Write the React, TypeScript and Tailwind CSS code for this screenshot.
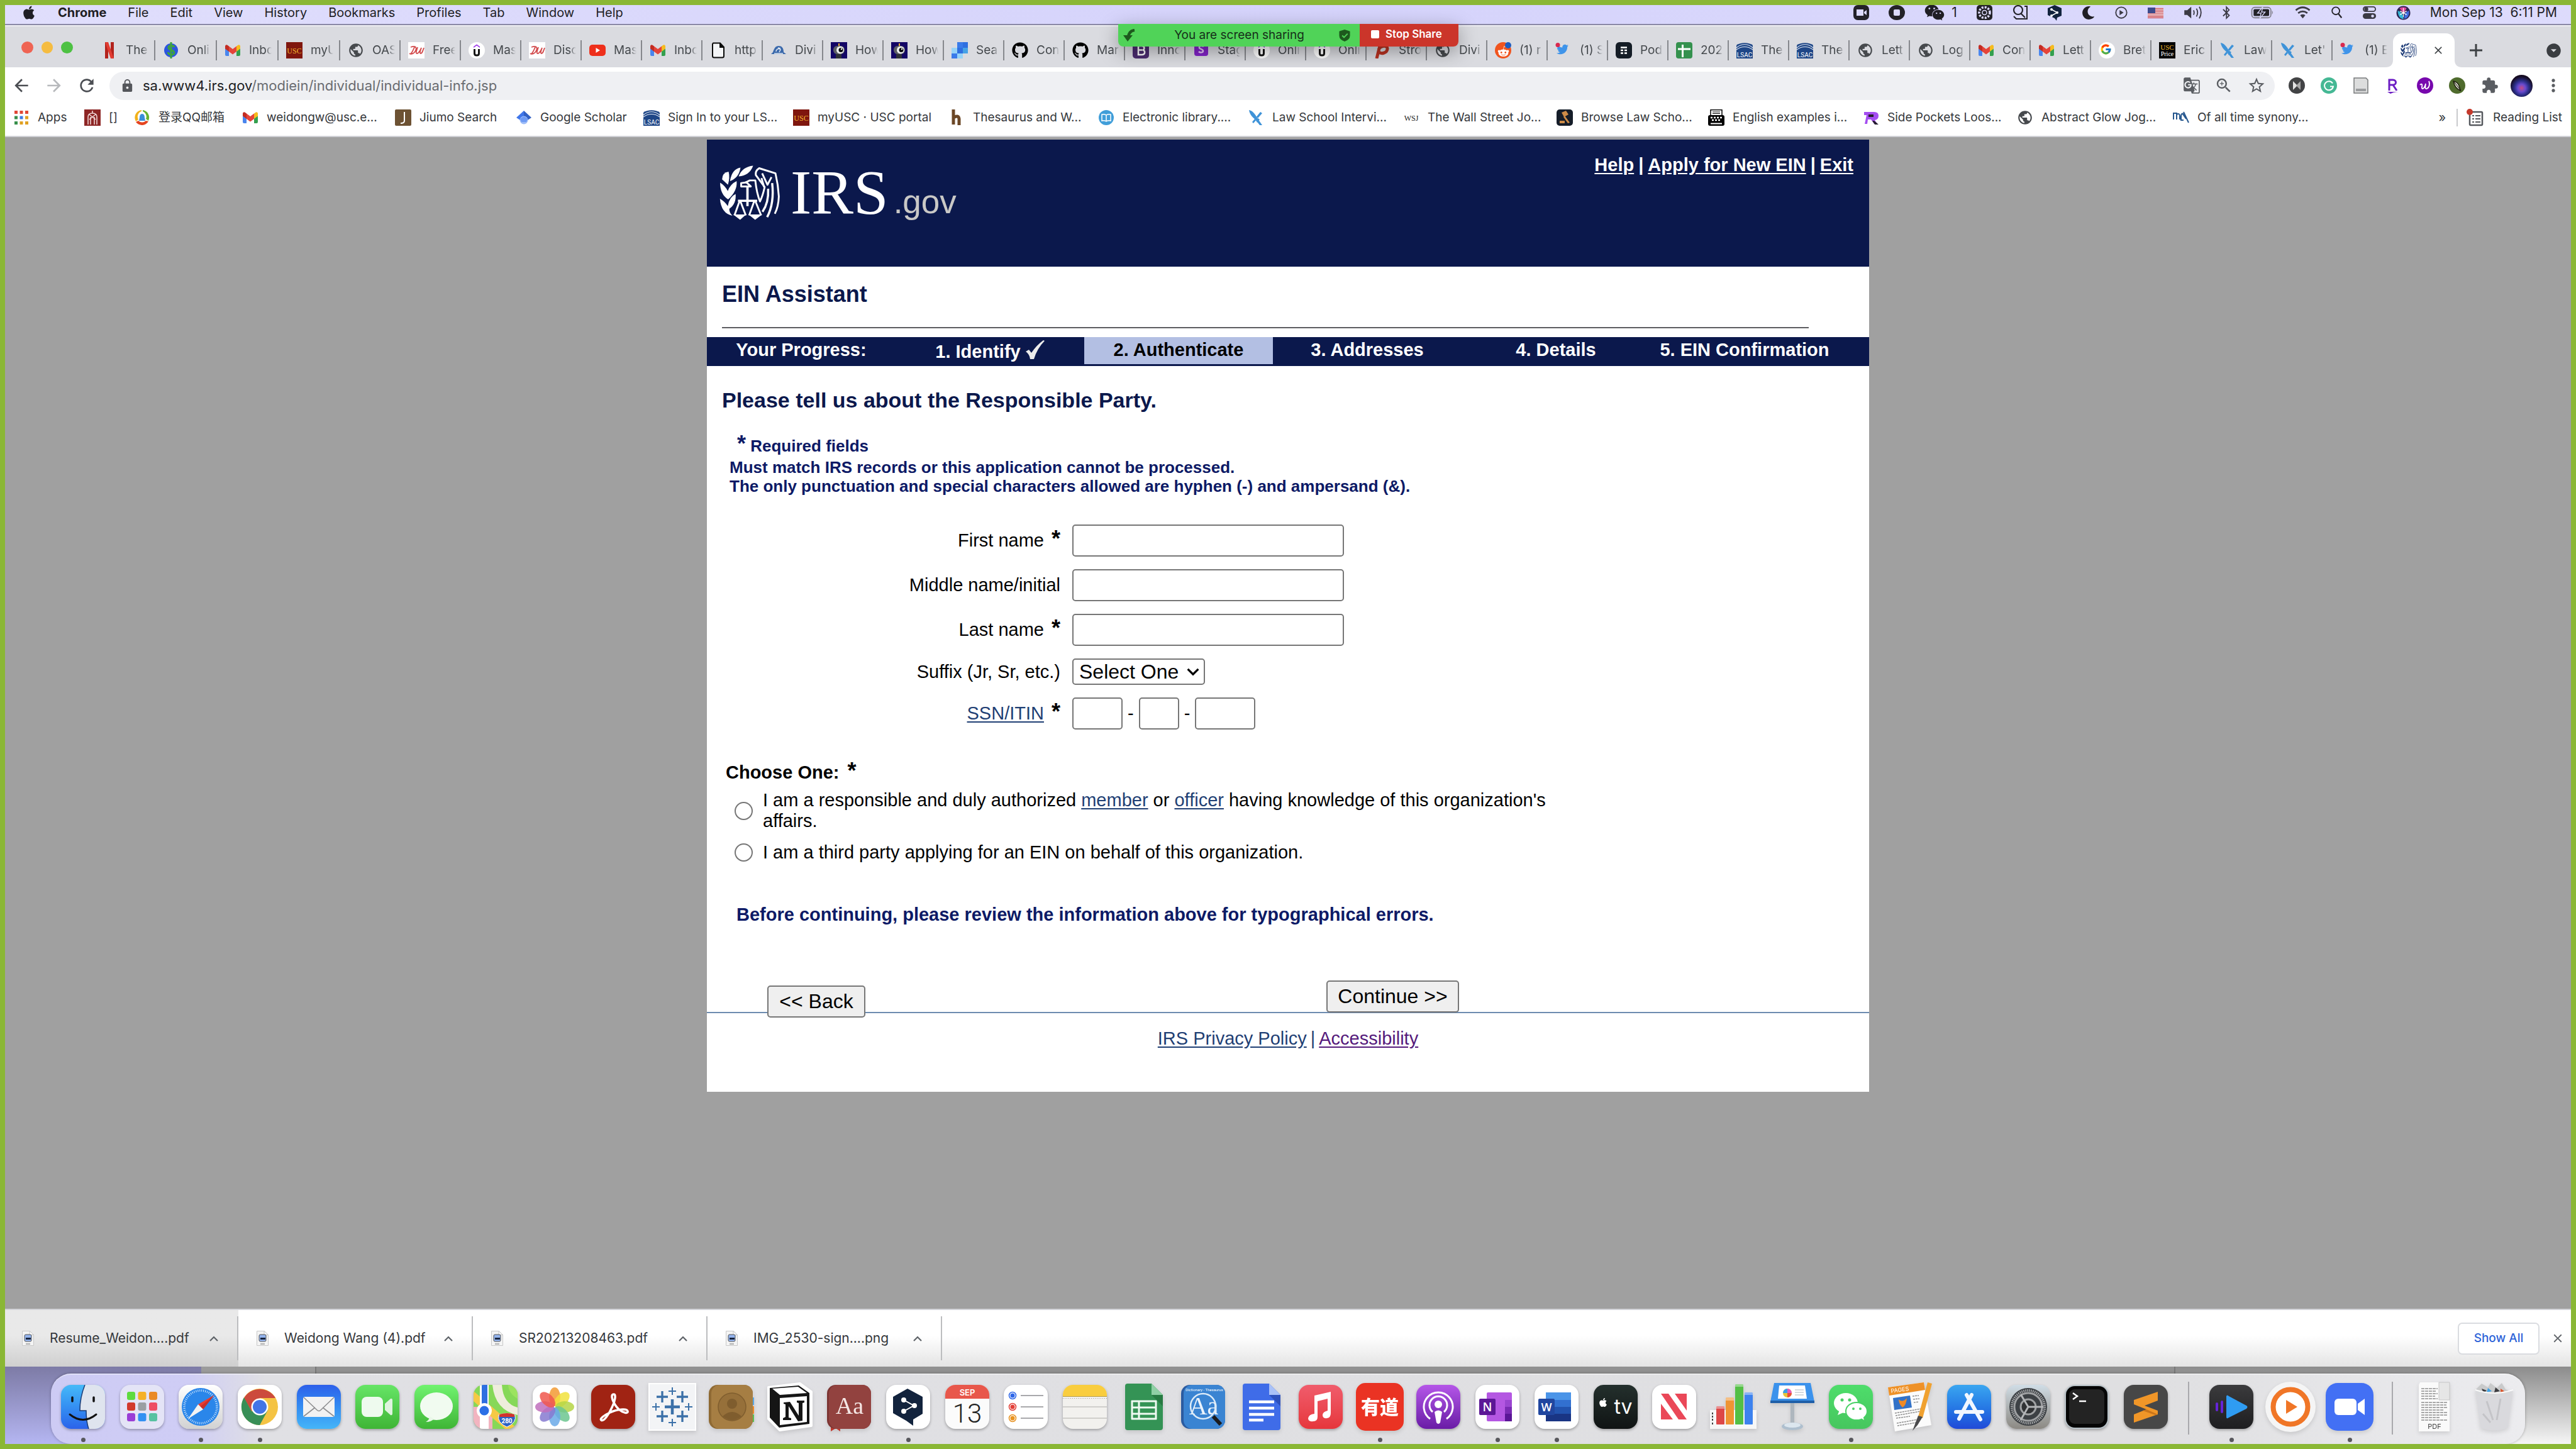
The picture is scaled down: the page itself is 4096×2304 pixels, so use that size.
import React from "react";
import { FaApple, FaBluetoothB, FaGithub, FaMoon, FaRedditAlien, FaTwitter, FaWeixin } from "react-icons/fa";
import { FcGoogle } from "react-icons/fc";
import {
  MdArrowBack,
  MdArrowDropDownCircle,
  MdArrowForward,
  MdClose,
  MdExtension,
  MdGTranslate,
  MdLock,
  MdMoreVert,
  MdOutlineZoomIn,
  MdPublic,
  MdRefresh,
  MdStarBorder,
} from "react-icons/md";

type Kids = { children?: React.ReactNode };

const ICON = "block size-[26px] shrink-0";

/* ---------- favicons ---------- */

const Fav = ({ children }: Kids) => (
  <svg viewBox="0 0 26 26" className={ICON} aria-hidden="true">
    {children}
  </svg>
);

const Globe = () => <MdPublic className={`${ICON} text-[#46494d]`} />;

const Gmail = () => (
  <Fav>
    <path d="M1 6v14a2 2 0 0 0 2 2h4V11z" fill="#4a86ee" />
    <path d="M25 6v14a2 2 0 0 1-2 2h-4V11z" fill="#34a04f" />
    <path d="M19 6.500l2-1.500c2-1.400 4-.5 4 2v3.500l-6 4.500z" fill="#f6bb1d" />
    <path d="M7 6.500L5 5C3 3.600 1 4.500 1 7v3.500L7 15z" fill="#c32c22" />
    <path d="M7 6.500l6 4.600 6-4.600V15l-6 4.600L7 15z" fill="#e5443a" />
  </Fav>
);

const Netflix = () => (
  <Fav>
    <path d="M6 0h5v26l-5 0z" fill="#b3231d" />
    <path d="M15 0h5v26h-5z" fill="#b3231d" />
    <path d="M6 0h5l9 26h-5z" fill="#e23c32" />
  </Fav>
);

const Dollar = () => (
  <Fav>
    <circle cx="13" cy="13" r="11" fill="#2c55e0" />
    <path d="M13 0v26M18 8c-1-3-9-4-9 1 0 4 9 3 9 8 0 4-9 4-10-1" fill="none" stroke="#3fa33c" strokeWidth="3" />
  </Fav>
);

const Usc = () => (
  <Fav>
    <rect width="26" height="26" fill="#7f160e" />
    <text x="13" y="17.500" textAnchor="middle" fontSize="12" fontFamily="Liberation Serif, serif" fill="#f3b72f">
      USC
    </text>
  </Fav>
);

const UscPrice = () => (
  <Fav>
    <rect width="26" height="26" fill="#050505" />
    <text x="13" y="12" textAnchor="middle" fontSize="11" fontFamily="Liberation Serif, serif" fill="#f0b526">
      USC
    </text>
    <text x="13" y="22" textAnchor="middle" fontSize="10" fontFamily="Liberation Serif, serif" fill="#fff">
      Price
    </text>
  </Fav>
);

const Du = () => (
  <Fav>
    <rect width="26" height="26" fill="#fff" />
    <path
      d="M4 19C8 14 9 10 10 8M4 8c7-3 10 0 8 5s-7 7-10 5M15 8c-1 4-4 10-1 10 3 0 5-5 7-9-2 5-3 9-1 9 2 0 3-3 5-9"
      fill="none"
      stroke="#d24a4c"
      strokeWidth="1.800"
    />
  </Fav>
);

const Udemy = () => (
  <Fav>
    <circle cx="13" cy="13" r="13" fill="#fff" />
    <path d="M8 9v-2l5-3.500L18 7v2l-5-3.500z" fill="#9a35e8" />
    <path d="M9.500 11v7c0 4 7 4 7 0v-7" fill="none" stroke="#151515" strokeWidth="3" />
  </Fav>
);

const YouTube = () => (
  <Fav>
    <rect x="0" y="4" width="26" height="18" rx="5" fill="#ee2f1b" />
    <path d="M10.500 9v8l6.500-4z" fill="#fff" />
  </Fav>
);

const FileIcon = () => (
  <Fav>
    <path d="M5 1.500h11l6 6.500v14a2.500 2.500 0 0 1-2.500 2.500h-13A2.500 2.500 0 0 1 4 22V3z" fill="#f4f5f7" stroke="#0a0a0a" strokeWidth="2" />
    <path d="M15 1v8h7" fill="#0a0a0a" />
  </Fav>
);

const Seal = () => (
  <Fav>
    <path d="M4 16c2-6 4-10 9-10s8 3 8 10l4 3H1z" fill="#3b69ab" />
    <path d="M9 15c0-4 5-6 7-3l-2 4M12 9l4 1M6 18h14" fill="none" stroke="#dfe7f2" strokeWidth="1.500" />
  </Fav>
);

const Robot = () => (
  <Fav>
    <rect width="26" height="26" fill="#130666" />
    <rect x="4" y="6" width="18" height="13" rx="6" fill="#5d6066" />
    <circle cx="15" cy="12.500" r="6" fill="#eef0f2" />
    <circle cx="16" cy="12.500" r="3.500" fill="#0c0c10" />
    <circle cx="17" cy="11" r="1.200" fill="#fff" />
    <path d="M13 2v4" stroke="#f2b233" strokeWidth="2" />
    <path d="M8 19h9v7H8z" fill="#303238" />
  </Fav>
);

const Squares = () => (
  <Fav>
    <path d="M9 0h17v18H0V9h9z" fill="#46a2e6" />
    <path d="M9 0h9v9H9zM0 18h9v8H0z" fill="#3a7bea" />
    <path d="M18 0h8v9h-8zM9 9h9v9H9z" fill="#2f6fe0" />
    <path d="M0 9h9v9H0zM9 18h9v8H9z" fill="#97d3f7" />
  </Fav>
);

const Bootstrap = () => (
  <Fav>
    <rect width="26" height="26" rx="5" fill="#4b2c70" />
    <path d="M9 6h5.500c5 0 5 6 1 6.500 5 .5 5 7.500-1 7.500H9zM9 12.500h6" fill="none" stroke="#fff" strokeWidth="2.500" />
  </Fav>
);

const StagS = () => (
  <Fav>
    <rect x="2" y="2" width="22" height="20" rx="4" fill="#8324c9" />
    <path d="M17 7c-3-2-8-1-7 2 0 2 6 2 6 5s-5 3-7 1" fill="none" stroke="#e9c8fb" strokeWidth="2.500" />
  </Fav>
);

const RedP = () => (
  <Fav>
    <path d="M4 26L9 6M7 12c3-7 15-8 14-1-1 7-10 8-13 5" fill="none" stroke="#b93322" strokeWidth="5" />
  </Fav>
);

const Reddit = () => (
  <Fav>
    <circle cx="13" cy="13" r="13" fill="#f0541e" />
    <FaRedditAlien x={4} y={5} width={18} height={18} color="#fff" />
    <circle cx="21" cy="5" r="5" fill="#1d5cc0" />
  </Fav>
);

const Twitter = () => (
  <Fav>
    <FaTwitter x={2} y={2} width={22} height={22} color="#3f94ea" />
    <circle cx="4" cy="4.500" r="3.500" fill="#d9294f" />
  </Fav>
);

const Pod = () => (
  <Fav>
    <rect width="26" height="26" rx="6" fill="#141c26" />
    <path d="M8 8.500h10M8 13h4M14 13h4M8 17.500h4M14 17.500h4" stroke="#fff" strokeWidth="2.500" />
  </Fav>
);

const Sheets = () => (
  <Fav>
    <rect width="26" height="26" rx="4" fill="#34914e" />
    <path d="M10.500 4v20M3 11h20" stroke="#fff" strokeWidth="3" />
  </Fav>
);

const Lsac = () => (
  <Fav>
    <path d="M0 5C6 0 20 0 26 5v21H0z" fill="#1e4687" />
    <path d="M0 9c8-7 18-7 26 0M0 12c8-6 18-6 26 0" fill="none" stroke="#e3e9f3" strokeWidth="1.200" />
    <text x="13" y="24" textAnchor="middle" fontSize="10" fontFamily="Roboto, sans-serif" fill="#fff">
      LSAC
    </text>
  </Fav>
);

const GoogleG = () => (
  <Fav>
    <circle cx="13" cy="13" r="13" fill="#fff" />
    <FcGoogle x={2} y={2} width={22} height={22} />
  </Fav>
);

const BlueBird = () => (
  <Fav>
    <path d="M2 1c5 1 9 5 12 11l9 13-4 0L12 16C6 11 3 7 2 1z" fill="#3f93d8" />
    <path d="M20 4L7 20l2 2L23 6zM8 8l11 8-4 5z" fill="#3f93d8" />
  </Fav>
);

const Eagle = ({ className, color }: { className: string; color: string }) => (
  <svg viewBox="90 84 362 328" className={className} role="img" aria-label="IRS eagle">
    <g fill={color}>
      <path d="M290 86Q225 92 203 150Q268 146 290 86Z" />
      <path d="M214 97Q163 105 151 178Q206 158 214 97Z" />
      <path d="M143 122Q104 128 104 168L139 200Q152 160 143 122Z" />
      <path d="M92 188Q120 204 138 238Q152 196 191 178Q197 236 140 288Q92 258 92 188Z" />
      <path d="M91 284Q120 300 138 328Q148 272 185 256Q190 316 147 344Q146 366 166 386Q98 372 91 284Z" />
      <path d="M170 378h78l-36 32zM262 378h82l-42 32z" />
    </g>
    <g fill="none" stroke={color} strokeWidth="11" strokeLinejoin="round">
      <path d="M245 186L270 174H303Q311 250 331 300Q347 268 359 214L306 142Q302 116 326 101L424 132Q440 200 444 270Q442 330 420 374" />
      <path d="M218 210V190L250 186L276 210Z" />
      <path d="M256 210V328M199 296H314" strokeWidth="14" />
      <path d="M208 300L178 384M214 300L246 384M296 300L266 384M304 300L338 384" />
      <path d="M344 132L358 162L376 200L400 154" />
      <path d="M404 190Q418 310 374 394M380 224Q384 308 346 362" strokeWidth="13" />
      <path d="M356 214L340 160" />
    </g>
  </svg>
);

const tabs: { icon: React.ReactNode; title: string; wide?: boolean }[] = [
  { icon: <Netflix />, title: "The", wide: true },
  { icon: <Dollar />, title: "Onli", wide: true },
  { icon: <Gmail />, title: "Inbo", wide: true },
  { icon: <Usc />, title: "myU", wide: true },
  { icon: <Globe />, title: "OAS" },
  { icon: <Du />, title: "Free" },
  { icon: <Udemy />, title: "Mas" },
  { icon: <Du />, title: "Disc" },
  { icon: <YouTube />, title: "Mas" },
  { icon: <Gmail />, title: "Inbo" },
  { icon: <FileIcon />, title: "http" },
  { icon: <Seal />, title: "Divi" },
  { icon: <Robot />, title: "How" },
  { icon: <Robot />, title: "How" },
  { icon: <Squares />, title: "Sea" },
  { icon: <FaGithub className={`${ICON} text-black`} />, title: "Con" },
  { icon: <FaGithub className={`${ICON} text-black`} />, title: "Mar" },
  { icon: <Bootstrap />, title: "Inno" },
  { icon: <StagS />, title: "Stag" },
  { icon: <Udemy />, title: "Onli" },
  { icon: <Udemy />, title: "Onli" },
  { icon: <RedP />, title: "Stro" },
  { icon: <Globe />, title: "Divi" },
  { icon: <Reddit />, title: "(1) r" },
  { icon: <Twitter />, title: "(1) S" },
  { icon: <Pod />, title: "Pod" },
  { icon: <Sheets />, title: "202" },
  { icon: <Lsac />, title: "The" },
  { icon: <Lsac />, title: "The" },
  { icon: <Globe />, title: "Lett" },
  { icon: <Globe />, title: "Log" },
  { icon: <Gmail />, title: "Con" },
  { icon: <Gmail />, title: "Lett" },
  { icon: <GoogleG />, title: "Bret" },
  { icon: <UscPrice />, title: "Eric" },
  { icon: <BlueBird />, title: "Law" },
  { icon: <BlueBird />, title: "Let'" },
  { icon: <Twitter />, title: "(1) E" },
];

/* ---------- macOS menu bar ---------- */

const menus = ["File", "Edit", "View", "History", "Bookmarks", "Profiles", "Tab", "Window", "Help"];

const Status = ({ w, h = 24, className, children }: Kids & { w: number; h?: number; className: string }) => (
  <svg viewBox={`0 0 ${w} ${h}`} className={`block shrink-0 ${className}`} fill="#232228" aria-hidden="true">
    {children}
  </svg>
);

const MenuBar = () => (
  <header className="flex h-[32px] items-start justify-between border-b-2 border-[#8a88a6] bg-linear-to-r from-[#e0defc] via-[#d5d3fb] to-[#dddbfc] pr-[22px] pl-[26px] text-[#1f1e24]">
    <nav aria-label="Menu bar" className="flex h-[23px] items-center gap-[34px] text-[20px]">
      <FaApple className="size-[24px]" />
      <span className="font-bold">Chrome</span>
      {menus.map((m) => (
        <span key={m}>{m}</span>
      ))}
    </nav>
    <div className="flex h-[24px] items-center gap-[31px] text-[21px]">
      <Status w={25} className="h-[24px] w-[25px]">
        <rect width="25" height="24" rx="7" />
        <path d="M5 7h11v10H5zM17 11l4-3v8l-4-3z" fill="#dcdafc" />
      </Status>
      <Status w={26} className="h-[24px] w-[26px]">
        <ellipse cx="13" cy="12" rx="13" ry="12" />
        <rect x="8" y="7" width="10" height="10" rx="2" fill="#dcdafc" />
      </Status>
      <span className="flex items-center gap-[11px]">
        <FaWeixin className="size-[32px]" />1
      </span>
      <Status w={25} className="h-[24px] w-[25px]">
        <rect width="25" height="24" rx="5" />
        <circle cx="12.500" cy="12" r="8.500" fill="none" stroke="#dcdafc" strokeWidth="3.500" strokeDasharray="3 2" />
        <circle cx="12.500" cy="12" r="3.500" fill="none" stroke="#dcdafc" strokeWidth="1.500" />
      </Status>
      <Status w={25} className="h-[24px] w-[25px]">
        <path d="M20 2h4v20H7l-4-4" fill="none" stroke="#232228" strokeWidth="2" />
        <circle cx="10" cy="8" r="7" fill="none" stroke="#232228" strokeWidth="2.200" />
        <path d="M14 13l7 7" stroke="#232228" strokeWidth="2.200" />
      </Status>
      <Status w={24} className="h-[26px] w-[24px]">
        <path d="M12 0l11 5v12l-7 3-1 5-3-4L1 16V5z" fill="#12233d" />
        <path d="M7 7l9 5-9 5" fill="none" stroke="#fff" strokeWidth="1.500" />
        <circle cx="7" cy="7" r="2" fill="#fff" />
        <circle cx="16" cy="12" r="2" fill="#fff" />
        <circle cx="7" cy="17" r="2" fill="#fff" />
      </Status>
      <FaMoon className="size-[21px]" />
      <Status w={22} className="h-[22px] w-[22px]">
        <circle cx="11" cy="12" r="9.500" fill="none" stroke="#3b3a44" strokeWidth="2" />
        <path d="M8 7.500v9l7-4.500z" fill="#3b3a44" />
      </Status>
      <Status w={25} h={17} className="h-[17px] w-[25px]">
        <rect width="25" height="17" fill="#f7f4f6" />
        <path d="M0 1.300h25M0 4h25M0 6.600h25M0 9.200h25M0 11.800h25M0 14.400h25M0 16.500h25" stroke="#c7404b" strokeWidth="1.300" />
        <rect width="12" height="9" fill="#3d4b8c" />
      </Status>
      <Status w={31} className="h-[22px] w-[31px]">
        <path d="M1 8h5l7-6v20l-7-6H1z" fill="#3b3a44" />
        <path d="M17 8q2 4 0 8M22 5q4 7 0 14M27 2q6 10 0 20" fill="none" stroke="#3b3a44" strokeWidth="2" />
      </Status>
      <FaBluetoothB className="h-[22px] w-[14px] text-[#3b3a44]" />
      <Status w={39} className="h-[22px] w-[39px]">
        <rect x="1" y="3" width="33" height="18" rx="5" fill="none" stroke="#84838f" strokeWidth="2" />
        <rect x="4" y="6" width="27" height="12" rx="2" />
        <path d="M36 8.500q3 3 0 7z" fill="#84838f" />
        <path d="M20 2l-9 11h6l-2 9 9-11h-6z" stroke="#dcdafc" strokeWidth="1.500" />
      </Status>
      <Status w={27} className="h-[22px] w-[27px]">
        <path d="M1.500 8q12-10 24 0M5.500 13q8-6 16 0" fill="none" stroke="#3b3a44" strokeWidth="3" />
        <path d="M9 16.500q4.500-3 9 0L13.500 22z" fill="#3b3a44" />
      </Status>
      <Status w={19} className="h-[22px] w-[19px]">
        <circle cx="8" cy="9" r="6.500" fill="none" stroke="#232228" strokeWidth="2" />
        <path d="M12.500 14l5.500 7" stroke="#232228" strokeWidth="2.500" />
      </Status>
      <Status w={23} className="h-[22px] w-[23px]">
        <rect x="1" y="2" width="21" height="8" rx="4" fill="none" stroke="#3b3a44" strokeWidth="2" />
        <circle cx="6" cy="6" r="3.500" fill="#3b3a44" />
        <rect x="0" y="13" width="23" height="10" rx="5" fill="#3b3a44" />
        <circle cx="17" cy="18" r="2.500" fill="#dcdafc" />
      </Status>
      <Status w={23} className="h-[23px] w-[23px]">
        <circle cx="11.500" cy="12" r="11.500" fill="#2b2350" />
        <path d="M2 8q9 3 10 14-9 0-10-14z" fill="#35b6d6" />
        <path d="M21 8q-9 3-8 14 9-2 8-14z" fill="#3f6de0" />
        <path d="M5 4q6-3 12 0l-5 9z" fill="#e0489b" />
        <path d="M11.500 4v15M6 9l11 6M17 9L6 15" stroke="#fff" strokeWidth="1.200" />
      </Status>
      <time className="whitespace-pre">Mon Sep 13{"  "}6:11 PM</time>
    </div>
  </header>
);

/* ---------- browser chrome ---------- */

const TabStrip = () => (
  <div className="relative flex h-[67px] items-end border-t-2 border-[#eeeef2] bg-[#dadbe0] pl-[26px] text-[19px] text-[#45494d]">
    <div className="mr-[33px] flex h-[54px] w-[82px] shrink-0 items-center gap-[13px] pb-[10px]">
      <button aria-label="Close window" className="size-[19px] rounded-full bg-[#ef6454]" />
      <button aria-label="Minimize window" className="size-[19px] rounded-full bg-[#f5bc41]" />
      <button aria-label="Zoom window" className="size-[19px] rounded-full bg-[#4dc143]" />
    </div>
    <div role="tablist" className="flex h-[54px] items-center">
      {tabs.map((t, i) => (
        <button
          role="tab"
          key={i}
          className={`flex h-[32px] shrink-0 items-center gap-[13px] pl-[12px] ${t.wide ? "w-[98px]" : "w-[96px]"} ${
            i < tabs.length - 1 ? "border-r-2 border-[#86888d]" : ""
          }`}
        >
          {t.icon}
          <span className="w-[36px] overflow-hidden text-left whitespace-nowrap [mask-image:linear-gradient(to_right,black_72%,transparent)]">
            {t.title}
          </span>
        </button>
      ))}
      <div role="tab" aria-selected="true" className="relative flex h-[54px] w-[98px] shrink-0 items-center justify-between rounded-t-[14px] bg-white pr-[16px] pl-[12px]">
        <svg viewBox="0 0 12 12" className="absolute bottom-0 -left-[12px] size-[12px]" aria-hidden="true">
          <path d="M12 0v12H0q12 0 12-12z" fill="#fff" />
        </svg>
        <svg viewBox="0 0 12 12" className="absolute -right-[12px] bottom-0 size-[12px]" aria-hidden="true">
          <path d="M0 0v12h12Q0 12 0 0z" fill="#fff" />
        </svg>
        <Eagle className="size-[26px]" color="#1f3d78" />
        <button aria-label="Close tab">
          <MdClose className="size-[20px] text-[#3c4043]" />
        </button>
      </div>
    </div>
    <div className="flex h-[54px] flex-1 items-center justify-between pr-[14px] pl-[24px]">
      <button aria-label="New tab">
        <svg viewBox="0 0 20 20" className="size-[20px]" aria-hidden="true">
          <path d="M10 0v20M0 10h20" stroke="#3c4043" strokeWidth="3" />
        </svg>
      </button>
      <button aria-label="Search tabs">
        <MdArrowDropDownCircle className="size-[27px] text-[#3a3d41]" />
      </button>
    </div>
    <div className="absolute -top-[4px] left-[1770px] flex h-[36px] w-[541px] overflow-hidden rounded-b-[8px] shadow-[0_8px_30px_rgba(0,0,0,0.35)]">
      <div className="flex flex-1 items-center justify-between bg-[#50d358] pr-[15px] pl-[8px] text-[19px] text-[#16301a]">
        <svg viewBox="0 0 20 20" className="size-[20px]" aria-hidden="true">
          <path d="M18 2Q9 3 8 13" fill="none" stroke="#1d5a1d" strokeWidth="4.500" />
          <path d="M0 10h15l-8 10z" fill="#1d5a1d" />
        </svg>
        <span className="pl-[6px]">You are screen sharing</span>
        <svg viewBox="0 0 18 20" className="h-[19px] w-[18px]" aria-hidden="true">
          <path d="M9 0l9 3v7q0 7-9 10Q0 17 0 10V3z" fill="#1d5a1d" />
          <path d="M5 10l3 3 6-6" fill="none" stroke="#50d358" strokeWidth="2" />
        </svg>
      </div>
      <button className="flex w-[157px] items-center gap-[10px] bg-[#cb352a] pb-[3px] pl-[18px] text-[17px] font-semibold whitespace-nowrap text-white">
        <span className="size-[13px] rounded-[2px] bg-white" />
        Stop Share
      </button>
    </div>
  </div>
);

const Toolbar = () => (
  <div className="flex h-[58px] items-center bg-white pr-[12px] pl-[10px] text-[#5a5d62]">
    <div className="flex w-[156px] shrink-0 items-center gap-[20px]">
      <button aria-label="Back">
        <MdArrowBack className="size-[32px] text-[#4b4e53]" />
      </button>
      <button aria-label="Forward">
        <MdArrowForward className="size-[32px] text-[#b7b9bc]" />
      </button>
      <button aria-label="Reload">
        <MdRefresh className="size-[32px] text-[#4b4e53]" />
      </button>
    </div>
    <div className="flex h-[45px] flex-1 items-center rounded-full bg-[#eff0f3] pr-[14px] pl-[17px]">
      <MdLock className="mr-[13px] size-[23px] text-[#54565b]" />
      <span className="flex-1 text-[22px] text-[#6a6c71]">
        <span className="text-[#202124]">sa.www4.irs.gov</span>/modiein/individual/individual-info.jsp
      </span>
      <div className="flex items-center gap-[22px]">
        <button aria-label="Translate">
          <MdGTranslate className="size-[28px]" />
        </button>
        <button aria-label="Zoom level">
          <MdOutlineZoomIn className="size-[30px]" />
        </button>
        <button aria-label="Bookmark this tab">
          <MdStarBorder className="size-[30px]" />
        </button>
      </div>
    </div>
    <div className="ml-[22px] flex items-center gap-[25px]">
      <Fav>
        <circle cx="13" cy="13" r="13" fill="#424345" />
        <path d="M7 6l7 7-7 7z" fill="#e4e4e4" />
        <path d="M19 6v14l-7-7z" fill="#a9a9a9" />
      </Fav>
      <Fav>
        <circle cx="13" cy="13" r="13" fill="#45b894" />
        <path d="M19 9.500a7 7 0 1 0 1 5h-5" fill="none" stroke="#fff" strokeWidth="2" />
      </Fav>
      <Fav>
        <path d="M2 1h19l3 3v21H2z" fill="#dcdddd" stroke="#77797b" strokeWidth="1.500" />
        <path d="M5 18h16v4H5z" fill="#9a9c9e" />
      </Fav>
      <Fav>
        <path d="M7 21V4h6c6 0 6 8 0 8H7M13 12l6 9" fill="none" stroke="#6d1fc4" strokeWidth="3" />
        <path d="M4 23h18q-8 0-13 3z" fill="#6d1fc4" />
      </Fav>
      <Fav>
        <circle cx="13" cy="13" r="13" fill="#7707ad" />
        <path d="M5 12c2-2 4-2 3 3s4 4 6-5c-1 6-1 9 2 8 4-2 5-8 3-12" fill="none" stroke="#fff" strokeWidth="1.800" />
      </Fav>
      <Fav>
        <circle cx="13" cy="13" r="13" fill="#4f6b2d" />
        <path d="M7 6q9 1 11 15Q9 17 7 6z" fill="#f3f3ea" stroke="#20210f" strokeWidth="1.500" />
        <path d="M8 7l11 14" stroke="#20210f" strokeWidth="1.200" />
      </Fav>
      <button aria-label="Extensions">
        <MdExtension className="size-[28px]" />
      </button>
      <span className="-ml-[6px] block size-[35px] rounded-full bg-[radial-gradient(circle_at_50%_60%,#c44a86_0,#6a4bd0_22%,#2b2f8a_42%,#160c22_68%)]" />
      <button aria-label="Menu" className="-ml-[8px]">
        <MdMoreVert className="size-[32px]" />
      </button>
    </div>
  </div>
);

const bookmarks: { icon: React.ReactNode; label: string; width: string }[] = [
  {
    icon: (
      <Fav>
        {[0, 1, 2].map((r) =>
          [0, 1, 2].map((c) => (
            <rect
              key={`${r}${c}`}
              x={2 + c * 8.5}
              y={2 + r * 8.5}
              width="5"
              height="5"
              fill={r === 0 ? "#e04736" : r === 1 ? (c === 0 ? "#388f4b" : c === 1 ? "#3f7be6" : "#e0a021") : c === 0 ? "#388f4b" : "#e0a021"}
            />
          ))
        )}
      </Fav>
    ),
    label: "Apps",
    width: "w-[113px]",
  },
  {
    icon: (
      <Fav>
        <rect width="26" height="26" fill="#8d2625" />
        <path d="M13 2v4M6 24V12q0-6 7-6t7 6v12M10 24V12M16 24V12M8 8l10 8M18 8L8 16" fill="none" stroke="#f3dedd" strokeWidth="1.500" />
      </Fav>
    ),
    label: "[]",
    width: "w-[79px]",
  },
  {
    icon: (
      <Fav>
        <path d="M12 1A12 12 0 0 0 3 19l4-3a9 9 0 0 1 5-13z" fill="#f2b21b" />
        <path d="M14 1a12 12 0 0 1 9 17l-4-3A9 9 0 0 0 14 3z" fill="#68b42e" />
        <path d="M3 20a12 12 0 0 0 20-1l-4-1q-6 5-12 0z" fill="#e5441f" />
        <path d="M13 7q-4 0-4 6l-1 5h10l-1-5q0-6-4-6z" fill="#3a8ed8" />
      </Fav>
    ),
    label: "登录QQ邮箱",
    width: "w-[172px]",
  },
  { icon: <Gmail />, label: "weidongw@usc.e...", width: "w-[243px]" },
  {
    icon: (
      <Fav>
        <rect width="26" height="26" rx="2" fill="#6d5233" />
        <path d="M15 4v14q0 4-6 4" fill="none" stroke="#fff" strokeWidth="2" />
      </Fav>
    ),
    label: "Jiumo Search",
    width: "w-[192px]",
  },
  {
    icon: (
      <Fav>
        <path d="M13 2L1 13l6 4 6-5z" fill="#3f76ea" />
        <path d="M13 2l12 11-6 4-6-5z" fill="#3160c4" />
        <circle cx="13" cy="17" r="6.500" fill="#9dbcf8" />
        <path d="M7 15q6-7 12 0l-2 5H9z" fill="#6d9af4" />
      </Fav>
    ),
    label: "Google Scholar",
    width: "w-[203px]",
  },
  { icon: <Lsac />, label: "Sign In to your LS...", width: "w-[238px]" },
  { icon: <Usc />, label: "myUSC · USC portal", width: "w-[247px]" },
  {
    icon: (
      <Fav>
        <path d="M8 0v24M8 13q8-5 9 2v10" fill="none" stroke="#6b4726" strokeWidth="5" />
      </Fav>
    ),
    label: "Thesaurus and W...",
    width: "w-[238px]",
  },
  {
    icon: (
      <Fav>
        <circle cx="13" cy="13" r="12" fill="#409ed9" />
        <path d="M13 9q-3-2-7-1v10q4-1 7 1 3-2 7-1V8q-4-1-7 1zv10" fill="none" stroke="#fff" strokeWidth="1.500" />
      </Fav>
    ),
    label: "Electronic library....",
    width: "w-[238px]",
  },
  { icon: <BlueBird />, label: "Law School Intervi...", width: "w-[247px]" },
  {
    icon: (
      <Fav>
        <text x="13" y="18" textAnchor="middle" fontSize="12" fontFamily="Liberation Serif, serif" fill="#222">
          WSJ
        </text>
      </Fav>
    ),
    label: "The Wall Street Jo...",
    width: "w-[244px]",
  },
  {
    icon: (
      <Fav>
        <rect width="26" height="26" rx="5" fill="#151d29" />
        <path d="M8 5l7-3 4 6-7 4zM13 10l8 11-3 1-7-10zM5 18h8v4H5z" fill="#cd8b47" />
      </Fav>
    ),
    label: "Browse Law Scho...",
    width: "w-[241px]",
  },
  {
    icon: (
      <Fav>
        <rect x="4" y=".7" width="18" height="10" fill="#fff" stroke="#000" strokeWidth="1.500" />
        <path d="M7 4h12M7 6.500h12" stroke="#000" />
        <rect y="9" width="26" height="17" rx="3" />
        <path d="M4 13h19M6 17h15" stroke="#fff" strokeWidth="2.500" strokeDasharray="3 2" />
        <path d="M4 22.500h18" stroke="#fff" strokeWidth="2" />
      </Fav>
    ),
    label: "English examples i...",
    width: "w-[246px]",
  },
  {
    icon: (
      <Fav>
        <path d="M2 4h16q7 0 7 6t-6 7l4 6h-5l-5-7H8l-1 7H3l3-14H2z" fill="#a44df0" />
        <path d="M9 8h8v4H9zM18 18l7 6h-6l-4-6z" fill="#241f2b" />
      </Fav>
    ),
    label: "Side Pockets Loos...",
    width: "w-[245px]",
  },
  { icon: <Globe />, label: "Abstract Glow Jog...", width: "w-[248px]" },
  {
    icon: (
      <Fav>
        <path d="M1 16V6h5v10M6 8q5-3 5 3v5M13 12q0-8 5-4M13 12v5h4M17 4l8 17M15 6l6 9" fill="none" stroke="#27588f" strokeWidth="2" />
      </Fav>
    ),
    label: "Of all time synony...",
    width: "w-[240px]",
  },
];

const BookmarksBar = () => (
  <nav aria-label="Bookmarks" className="flex h-[53px] items-center border-b-2 border-[#d0d1d6] bg-white pr-[14px] pb-[7px] pl-[13px] text-[19px] text-[#35383c]">
    {bookmarks.map((b) => (
      <a key={b.label} href="#" className={`flex shrink-0 items-center gap-[13px] whitespace-nowrap ${b.width}`}>
        {b.icon}
        {b.label}
      </a>
    ))}
    <div className="flex flex-1 items-center justify-end whitespace-nowrap">
      <button aria-label="More bookmarks" className="mr-[17px] text-[20px]">
        »
      </button>
      <button className="flex items-center gap-[14px] border-l-2 border-[#c9cacd] pl-[14px]">
        <svg viewBox="0 0 28 28" className="size-[28px]" aria-hidden="true">
          <rect x="5" y="5" width="20" height="21" rx="1.500" fill="none" stroke="#55585d" strokeWidth="2.500" />
          <path d="M9 11h3M9 16h3M9 21h3M14 11h8M14 16h8M14 21h8" stroke="#55585d" strokeWidth="2" />
          <circle cx="5" cy="5" r="5" fill="#c5392b" />
        </svg>
        Reading List
      </button>
    </div>
  </nav>
);

/* ---------- page ---------- */

const Star = ({ className = "" }: { className?: string }) => (
  <span className={`text-[36px] leading-[0px] font-bold ${className}`}>*</span>
);

const FIELD = "h-[51px] rounded-[5px] border-2 border-[#767676] bg-white px-2 text-[32px]";
const ROW = "grid grid-cols-[562px_1fr] items-center gap-[19px]";
const LINK = "text-[#1f3f74] underline underline-offset-[3px]";

const steps = ["Your Progress:", "1. Identify", "2. Authenticate", "3. Addresses", "4. Details", "5. EIN Confirmation"];

const EinPage = () => (
  <div className="mx-auto w-[1848px] bg-white font-['Liberation_Sans',Arial,sans-serif] text-[29px] leading-[33px] text-black">
    <header className="flex h-[202px] items-start justify-between bg-[#0b184c] pr-[25px] pl-[20px] text-white">
      <div className="flex items-start pt-[41px]">
        <Eagle className="h-[87px] w-[97px]" color="#fff" />
        <div className="ml-[16px] flex items-baseline leading-[86px]">
          <span className="font-['Liberation_Serif',serif] text-[100px]">IRS</span>
          <span className="ml-[8px] text-[53px] text-[#c9c8c6]">.gov</span>
        </div>
      </div>
      <nav className="flex gap-[7px] pt-[23px] leading-[34px] font-bold">
        <a href="#" className="underline underline-offset-[3px]">Help</a>
        <span>|</span>
        <a href="#" className="underline underline-offset-[3px]">Apply for New EIN</a>
        <span>|</span>
        <a href="#" className="underline underline-offset-[3px]">Exit</a>
      </nav>
    </header>

    <h1 className="mt-[23px] ml-[24px] text-[36px] leading-[42px] font-bold text-[#0b184c]">EIN Assistant</h1>
    <hr className="mt-[31px] mr-[96px] ml-[24px] border-t-2 border-[#5c5c60]" />

    <ol className="mt-[14px] flex h-[46px] bg-[#0b184c] text-center leading-[40px] font-bold text-white">
      {steps.map((s, i) => (
        <li key={s} className={i === 2 ? "h-[43px] w-[300px] bg-[#b3bfe3] text-black" : i === 1 ? "flex w-[300px] items-start justify-center gap-[8px] pt-[3px]" : "w-[300px]"}>
          {s}
          {i === 1 && (
            <svg viewBox="0 0 30 30" className="mt-[2px] size-[30px]" aria-label="done">
              <path d="M0 18l5-3 4 5Q17 8 28 0l2 1Q18 13 13 30H7Q6 22 0 18z" fill="#ececec" />
            </svg>
          )}
        </li>
      ))}
    </ol>

    <h2 className="mt-[34px] ml-[24px] text-[34px] leading-[40px] font-bold text-[#0b184c]">Please tell us about the Responsible Party.</h2>

    <div className="mt-[38px] ml-[36px] text-[26px] leading-[30px] font-bold text-[#0d1a66]">
      <p className="mb-[4px] pl-[12px]">
        <Star /> Required fields
      </p>
      <p>Must match IRS records or this application cannot be processed.</p>
      <p>The only punctuation and special characters allowed are hyphen (-) and ampersand (&amp;).</p>
    </div>

    <form onSubmit={(e) => e.preventDefault()}>
      <div className="mt-[46px] flex flex-col gap-[20px]">
        <div className={ROW}>
          <label htmlFor="first" className="text-right">
            First name
            <Star className="ml-[12px]" />
          </label>
          <input id="first" type="text" className={`${FIELD} w-[432px]`} />
        </div>
        <div className={ROW}>
          <label htmlFor="middle" className="text-right">Middle name/initial</label>
          <input id="middle" type="text" className={`${FIELD} w-[432px]`} />
        </div>
        <div className={ROW}>
          <label htmlFor="last" className="text-right">
            Last name
            <Star className="ml-[12px]" />
          </label>
          <input id="last" type="text" className={`${FIELD} w-[432px]`} />
        </div>
        <div className={ROW}>
          <label htmlFor="suffix" className="text-right">Suffix (Jr, Sr, etc.)</label>
          <div className="relative w-[211px]">
            <select id="suffix" className="block h-[42px] w-full appearance-none rounded-[5px] border-2 border-[#767676] bg-white pl-[9px] text-[32px] leading-[38px]">
              <option>Select One</option>
            </select>
            <svg viewBox="0 0 22 14" className="pointer-events-none absolute top-[15px] right-[8px] h-[13px] w-[22px]" aria-hidden="true">
              <path d="M2 2l9 9 9-9" fill="none" stroke="#000" strokeWidth="3.500" />
            </svg>
          </div>
        </div>
        <div className={ROW}>
          <div className="text-right">
            <a href="#" className={LINK}>SSN/ITIN</a>
            <Star className="ml-[12px]" />
          </div>
          <div className="flex items-center gap-[8px]">
            <input aria-label="SSN/ITIN first three digits" type="text" className={`${FIELD} w-[80px]`} />
            <span>-</span>
            <input aria-label="SSN/ITIN middle two digits" type="text" className={`${FIELD} w-[64px]`} />
            <span>-</span>
            <input aria-label="SSN/ITIN last four digits" type="text" className={`${FIELD} w-[96px]`} />
          </div>
        </div>
      </div>

      <fieldset className="mt-[52px]">
        <legend className="ml-[30px] font-bold">
          Choose One:
          <Star className="ml-[13px]" />
        </legend>
        <div className="mt-[11px] ml-[44px] flex items-center gap-[16px]">
          <input id="member" name="role" type="radio" className="size-[29px] shrink-0 appearance-none rounded-full border-2 border-[#767676] bg-white" />
          <label htmlFor="member" className="max-w-[1262px]">
            I am a responsible and duly authorized <a href="#" className={LINK}>member</a> or{" "}
            <a href="#" className={LINK}>officer</a> having knowledge of this organization's affairs.
          </label>
        </div>
        <div className="mt-[17px] ml-[44px] flex items-center gap-[16px]">
          <input id="third" name="role" type="radio" className="size-[29px] shrink-0 appearance-none rounded-full border-2 border-[#767676] bg-white" />
          <label htmlFor="third">I am a third party applying for an EIN on behalf of this organization.</label>
        </div>
      </fieldset>

      <p className="mt-[66px] ml-[47px] font-bold text-[#0d1a66]">
        Before continuing, please review the information above for typographical errors.
      </p>

      <div className="mt-[88px] flex h-[50px] items-start pl-[96px] text-[32px]">
        <button className="relative mt-[8px] h-[51px] w-[156px] shrink-0 rounded-[5px] border-2 border-[#767676] bg-[#efefef]">&lt;&lt; Back</button>
        <button className="ml-[733px] h-[51px] w-[211px] shrink-0 rounded-[5px] border-2 border-[#767676] bg-[#efefef]">Continue &gt;&gt;</button>
      </div>
    </form>

    <footer className="flex h-[127px] justify-center gap-[6px] border-t-2 border-[#6d8bb0] pt-[24px]">
      <a href="#" className={LINK}>IRS Privacy Policy</a>
      <span className="text-[#1f3f74]">|</span>
      <a href="#" className="text-[#551a7b] underline underline-offset-[3px]">Accessibility</a>
    </footer>
  </div>
);

/* ---------- downloads ---------- */

const downloads = ["Resume_Weidon....pdf", "Weidong Wang (4).pdf", "SR20213208463.pdf", "IMG_2530-sign....png"];

const Downloads = () => (
  <section aria-label="Downloads" className="flex h-[92px] items-center border-t-2 border-[#d2d3d8] bg-linear-to-b from-white from-45% to-[#e4e4e4] text-[21px] text-[#35383c]">
    {downloads.map((d, i) => (
      <div key={d} className={`flex h-full items-center ${i === 0 ? "w-[371px] bg-linear-to-b from-[#e9e9e9] from-45% to-[#cfcfcf] pl-[27px]" : "w-[373px] pl-[29px]"}`}>
        <svg viewBox="0 0 19 24" className="mr-[25px] h-[24px] w-[19px]" aria-hidden="true">
          <path d="M.5.500h12l6 6v17H.5z" fill="#f4f4f4" stroke="#c8c8c8" />
          <path d="M12 .5l6.500 6H12z" fill="#fff" stroke="#c8c8c8" />
          <rect x="4" y="6" width="11" height="11" rx="2" fill="#94b4ee" stroke="#555" />
          <path d="M6 14h8v-3H6z" fill="#16233d" />
          <path d="M6 21h7" stroke="#999" strokeWidth="1.500" />
        </svg>
        <span className="w-[254px] whitespace-nowrap">{d}</span>
        <button aria-label={`Options for ${d}`}>
          <svg viewBox="0 0 14 9" className="h-[9px] w-[14px]">
            <path d="M1 8l6-6 6 6" fill="none" stroke="#5f6368" strokeWidth="2.200" />
          </svg>
        </button>
        <span className="ml-auto h-[70px] w-[2px] bg-[#bcbdbf]" />
      </div>
    ))}
    <div className="flex flex-1 items-center justify-end gap-[18px] pr-[10px]">
      <button className="h-[51px] w-[130px] rounded-[7px] border-2 border-[#dadce0] bg-white text-[19px] font-medium text-[#2d63d8]">Show All</button>
      <button aria-label="Close downloads bar">
        <MdClose className="size-[22px] text-[#5f6368]" />
      </button>
    </div>
  </section>
);

/* ---------- dock ---------- */

const Tile = ({ bg, children }: Kids & { bg: string }) => (
  <span className={`block size-[70px] overflow-hidden rounded-[16px] shadow-[0_2px_4px_rgba(0,0,0,0.3)] ${bg}`}>
    <svg viewBox="0 0 70 70" className="size-full" aria-hidden="true">
      {children}
    </svg>
  </span>
);

const Free = ({ className = "h-[78px] w-[76px]", children }: Kids & { className?: string }) => (
  <svg viewBox="0 0 76 78" className={`block drop-shadow-md ${className}`} aria-hidden="true">
    {children}
  </svg>
);

const launchColors = ["#5edb3f", "#f5b127", "#ea8a25", "#d23a2c", "#9b9fa3", "#ee4d63", "#9a3ed6", "#3391f2", "#57c2a1"];
const petals = ["#f29a33", "#f1e23c", "#b5d545", "#6cc58f", "#6aa9e8", "#8679d0", "#c070bd", "#f0574e"];

const dockApps: { name: string; running?: boolean; icon: React.ReactNode }[] = [
  {
    name: "Finder",
    running: true,
    icon: (
      <Tile bg="bg-linear-to-b from-[#47b9f8] to-[#2c62ea]">
        <path d="M38 0Q30 20 30 41h10Q40 58 44 70h26V0z" fill="#dfe4ee" />
        <path d="M38 0Q30 20 30 41h10Q40 58 44 70" fill="none" stroke="#1b3c76" strokeWidth="1.500" />
        <path d="M18 20v6M52 20v6" stroke="#111" strokeWidth="3.500" strokeLinecap="round" />
        <path d="M14 47q21 17 42 0" fill="none" stroke="#111" strokeWidth="3" strokeLinecap="round" />
      </Tile>
    ),
  },
  {
    name: "Launchpad",
    icon: (
      <Tile bg="bg-[#e4e4f6]">
        {launchColors.map((c, i) => (
          <rect key={c} x={11 + (i % 3) * 17.5} y={11 + Math.floor(i / 3) * 17} width="13" height="13" rx="3" fill={c} />
        ))}
      </Tile>
    ),
  },
  {
    name: "Safari",
    running: true,
    icon: (
      <Tile bg="bg-linear-to-b from-white to-[#d2d2d2]">
        <circle cx="35" cy="35" r="30" fill="#2a86ea" />
        <circle cx="35" cy="35" r="26" fill="none" stroke="#d4e8fb" strokeWidth="3.500" strokeDasharray="1 2" />
        <path d="M57 16L31 31l4 5z" fill="#e93d33" />
        <path d="M57 16L39 39l-5-4z" fill="#c8302a" />
        <path d="M15 54l16-23 8 8z" fill="#f3f3f3" />
      </Tile>
    ),
  },
  {
    name: "Google Chrome",
    running: true,
    icon: (
      <Tile bg="bg-white">
        <circle cx="35" cy="35" r="29" fill="#f4c343" />
        <path d="M10 21A29 29 0 0 1 60 21H35L22 42z" fill="#cc4a3d" />
        <path d="M10 20A29 29 0 0 0 35 64L48 40 22 42z" fill="#388f57" />
        <path d="M35 21h25q5 20-14 38l2-22z" fill="#f4c343" />
        <circle cx="35" cy="35" r="13.500" fill="#fff" />
        <circle cx="35" cy="35" r="11" fill="#4374e6" />
      </Tile>
    ),
  },
  {
    name: "Mail",
    icon: (
      <Tile bg="bg-linear-to-b from-[#2d5fea] to-[#45b5f8]">
        <rect x="10" y="19" width="50" height="32" rx="3" fill="#f2f2f2" />
        <path d="M11 20l21 20q3 3 6 0l21-20M11 50l18-14M59 50L41 36" fill="none" stroke="#8e8e90" strokeWidth="1.600" />
      </Tile>
    ),
  },
  {
    name: "FaceTime",
    icon: (
      <Tile bg="bg-linear-to-b from-[#66e566] to-[#3fb535]">
        <rect x="10" y="19" width="34" height="32" rx="8" fill="#eefaee" />
        <path d="M47 30l9-8q3-1 3 3v20q0 4-3 3l-9-8z" fill="#dff3df" />
      </Tile>
    ),
  },
  {
    name: "Messages",
    icon: (
      <Tile bg="bg-linear-to-b from-[#70f36f] to-[#3fb535]">
        <ellipse cx="35" cy="34" rx="26" ry="22" fill="#f1fbf0" />
        <path d="M24 50q0 6-6 9 9 0 13-5z" fill="#e9f7e8" />
      </Tile>
    ),
  },
  {
    name: "Maps",
    running: true,
    icon: (
      <Tile bg="bg-[#86d858]">
        <path d="M0 35h30v35H0z" fill="#f2b4c0" />
        <path d="M0 10L70 70H50L0 26z" fill="#f5c945" />
        <path d="M30 0h15q2 30 25 36v12Q34 40 30 0z" fill="#eeeddc" />
        <path d="M55 0h15v22Q56 14 55 0z" fill="#9be35f" />
        <path d="M10 0h14v70H10z" fill="#fff" />
        <path d="M13 0h9v36h-9z" fill="#2e6fe0" />
        <circle cx="17" cy="41" r="12" fill="#fff" />
        <circle cx="17" cy="41" r="7.500" fill="#2b6fe6" />
        <path d="M40 48q12-5 26 0 3 12-13 19-16-7-13-19z" fill="#2d62c4" stroke="#fff" />
        <path d="M41 47q12-4 24 0v4H41z" fill="#d2332c" />
        <text x="53" y="61" textAnchor="middle" fontSize="10" fontWeight="700" fontFamily="Roboto, sans-serif" fill="#fff">
          280
        </text>
      </Tile>
    ),
  },
  {
    name: "Photos",
    icon: (
      <Tile bg="bg-white">
        {petals.map((c, i) => (
          <ellipse key={c} cx="35" cy="19" rx="9" ry="15" fill={c} opacity="0.85" transform={`rotate(${i * 45} 35 35)`} />
        ))}
      </Tile>
    ),
  },
  {
    name: "Acrobat",
    icon: (
      <Tile bg="bg-[#a02313]">
        <path
          d="M36 15c-7 0-1 15 8 24 7 6 15 7 14 3-1-5-18-3-28 2-9 4-17 10-14 12 4 3 12-9 17-20 5-10 7-21 3-21z"
          fill="none"
          stroke="#fff"
          strokeWidth="3.500"
        />
      </Tile>
    ),
  },
  {
    name: "Tableau",
    icon: (
      <Free>
        <rect x="1" y="2" width="74" height="74" fill="#f3f4f6" stroke="#fff" strokeWidth="2" />
        <g stroke="#3b70a8">
          <path d="M38 27v24M26 39h24" strokeWidth="4.500" />
          <path d="M22 14v18M13 23h18M54 14v18M45 23h18M22 45v18M13 54h18M54 45v18M45 54h18" strokeWidth="3.300" />
          <path d="M38 8v12M32 14h12M38 58v12M32 64h12M12 33v12M6 39h12M64 33v12M58 39h12" strokeWidth="2" />
        </g>
      </Free>
    ),
  },
  {
    name: "Contacts",
    icon: (
      <Free>
        <path d="M60 24h14v12H60z" fill="#5aa7e4" />
        <path d="M60 38h14v12H60z" fill="#ee8a2b" />
        <path d="M60 51h14v12H60z" fill="#5cc155" />
        <rect x="2" y="4" width="70" height="70" rx="14" fill="#8f6a34" />
        <rect x="6" y="4" width="66" height="70" rx="14" fill="#a67e43" />
        <circle cx="39" cy="39" r="22" fill="#96703a" stroke="#7f5d2e" strokeWidth="1.500" />
        <circle cx="39" cy="34" r="8" fill="#7f5d2e" />
        <path d="M24 54q15-14 30 0-15 12-30 0z" fill="#7f5d2e" />
      </Free>
    ),
  },
  {
    name: "Notion",
    icon: (
      <Free>
        <path d="M4 8L54 2l18 13v54L22 76 4 58z" fill="#fff" stroke="#fff" strokeWidth="4" strokeLinejoin="round" />
        <path d="M6 9L52 5l17 12v49l-48 6L6 56z" fill="#151515" />
        <path d="M10 10l41-3 14 10-43 3z" fill="#fff" />
        <path d="M22 25l43-3v41l-43 5z" fill="#fff" />
        <path d="M28 32l10-1 14 22V33l-3-1v-3h12v3l-3 1v28l-7 1-15-24v18l4 1v3H27v-3l4-2V35l-3-1z" fill="#151515" />
      </Free>
    ),
  },
  {
    name: "Dictionary",
    icon: (
      <Free>
        <path d="M9 68h15v10l-7-5-8 5z" fill="#c0392f" />
        <rect x="3" y="4" width="70" height="70" rx="14" fill="#7c3533" />
        <rect x="6" y="4" width="67" height="70" rx="14" fill="#92423f" />
        <text x="39" y="50" textAnchor="middle" fontSize="38" fontFamily="Liberation Serif, serif" fill="#f5e7e5">
          Aa
        </text>
      </Free>
    ),
  },
  {
    name: "DeepL",
    running: true,
    icon: (
      <Tile bg="bg-white">
        <path d="M34 6l24 13v27L43 55v10L32 57 11 45V19z" fill="#12233d" />
        <path d="M28 24l16 9-16 9" fill="none" stroke="#fff" strokeWidth="2" />
        <circle cx="28" cy="24" r="4" fill="#fff" />
        <circle cx="45" cy="33" r="4" fill="#fff" />
        <circle cx="28" cy="42" r="4" fill="#fff" />
      </Tile>
    ),
  },
  {
    name: "Calendar",
    icon: (
      <Tile bg="bg-[#fbfbfb]">
        <path d="M0 0h70v22H0z" fill="#e8574b" />
        <text x="35" y="17" textAnchor="middle" fontSize="13" fontWeight="600" fontFamily="Inter, sans-serif" fill="#fff">
          SEP
        </text>
        <text x="35" y="60" textAnchor="middle" fontSize="42" fontWeight="300" fontFamily="Roboto, sans-serif" fill="#222">
          13
        </text>
      </Tile>
    ),
  },
  {
    name: "Reminders",
    icon: (
      <Tile bg="bg-white">
        {["#2c65e8", "#e23f37", "#e8921f"].map((c, i) => (
          <g key={c}>
            <circle cx="14" cy={17 + i * 18} r="5.500" fill="none" stroke={c} strokeWidth="1.500" />
            <circle cx="14" cy={17 + i * 18} r="3.500" fill={c} />
            <path d={`M27 ${17 + i * 18}h36`} stroke="#8d8d91" strokeWidth="1.300" />
          </g>
        ))}
      </Tile>
    ),
  },
  {
    name: "Notes",
    icon: (
      <Tile bg="bg-[#f2f1ee]">
        <path d="M0 0h70v18H0z" fill="#f9cd3e" />
        <path d="M0 18.500h70" stroke="#b69c4a" />
        <path d="M0 21.500h70" stroke="#9d9b95" strokeDasharray="1 2" />
        <path d="M0 35h70M0 53h70" stroke="#c5c4c0" strokeWidth="1.300" />
      </Tile>
    ),
  },
  {
    name: "Google Sheets",
    icon: (
      <Free>
        <path d="M12 2h38l18 18v52q0 4-4 4H12q-4 0-4-4V6q0-4 4-4z" fill="#349355" />
        <path d="M50 2l18 18H50z" fill="#8fd0a5" />
        <path d="M50 20h18v18z" fill="#277a42" />
        <path d="M18 30h40M18 40h40M18 50h40M18 58h40M19 29v30M30 29v30M57 29v30" stroke="#effaf2" strokeWidth="3" />
      </Free>
    ),
  },
  {
    name: "Dictionary Thesaurus",
    icon: (
      <Free>
        <rect x="3" y="4" width="70" height="70" rx="14" fill="#2b5ba0" />
        <rect x="7" y="4" width="66" height="70" rx="14" fill="#3a84d2" />
        <text x="40" y="14" textAnchor="middle" fontSize="6" fontFamily="Roboto, sans-serif" fill="#fff">
          Dictionary - Thesaurus
        </text>
        <text x="39" y="51" textAnchor="middle" fontSize="40" fontFamily="Liberation Serif, serif" fill="#eaf3fc">
          Aa
        </text>
        <circle cx="38" cy="38" r="20" fill="none" stroke="#dcebf8" strokeWidth="2.500" />
        <path d="M54 54l12 13" stroke="#1b1b1d" strokeWidth="6" />
      </Free>
    ),
  },
  {
    name: "Google Docs",
    icon: (
      <Free>
        <path d="M12 2h38l18 18v52q0 4-4 4H12q-4 0-4-4V6q0-4 4-4z" fill="#3f6ce8" />
        <path d="M50 2l18 18H50z" fill="#a9c1f8" />
        <path d="M50 20h18v18z" fill="#2d51bd" />
        <path d="M18 31h40M18 41h40M18 51h40M18 60h23" stroke="#fff" strokeWidth="4.500" />
      </Free>
    ),
  },
  {
    name: "Music",
    icon: (
      <Tile bg="bg-linear-to-b from-[#f05c6c] to-[#e6353b]">
        <path d="M25 17l26-6v34q0 7-6 8-7 1-7-5 0-5 8-7V22L30 26v25q0 7-7 7-8 1-8-5 1-6 10-7z" fill="#fff" />
      </Tile>
    ),
  },
  {
    name: "Youdao",
    running: true,
    icon: (
      <Free>
        <rect width="76" height="76" y="1" rx="15" fill="#ea3323" />
        <text x="38" y="50" textAnchor="middle" fontSize="30" fontWeight="900" fontFamily="Noto Sans CJK SC, sans-serif" fill="#fff">
          有道
        </text>
      </Free>
    ),
  },
  {
    name: "Podcasts",
    icon: (
      <Tile bg="bg-linear-to-b from-[#b556e8] to-[#6a1ba6]">
        <path d="M22 54A23 23 0 1 1 48 54M26 43a14 14 0 1 1 18 0" fill="none" stroke="#fff" strokeWidth="3" />
        <circle cx="35" cy="31" r="6" fill="#fff" />
        <path d="M29 43q6-5 12 0l-3 17q-3 4-6 0z" fill="#fff" />
      </Tile>
    ),
  },
  {
    name: "OneNote",
    running: true,
    icon: (
      <Tile bg="bg-white">
        <rect x="18" y="12" width="40" height="46" rx="2" fill="#b457e2" />
        <path d="M47 24h11v11H47z" fill="#9a45d0" />
        <path d="M47 35h11v11H47z" fill="#7a2ab3" />
        <path d="M47 46h11v12H47z" fill="#5a1696" />
        <rect x="6" y="22" width="26" height="26" rx="2" fill="#5c1796" />
        <text x="19" y="42" textAnchor="middle" fontSize="19" fontWeight="600" fontFamily="Open Sans, sans-serif" fill="#fff">
          N
        </text>
      </Tile>
    ),
  },
  {
    name: "Word",
    running: true,
    icon: (
      <Tile bg="bg-white">
        <rect x="18" y="12" width="40" height="12" fill="#4a94e8" />
        <rect x="18" y="24" width="40" height="11" fill="#3270d0" />
        <rect x="18" y="35" width="40" height="11" fill="#2253ae" />
        <rect x="18" y="46" width="40" height="12" fill="#193584" />
        <rect x="6" y="22" width="26" height="26" rx="2" fill="#20469f" />
        <text x="19" y="42" textAnchor="middle" fontSize="18" fontWeight="600" fontFamily="Open Sans, sans-serif" fill="#fff">
          W
        </text>
      </Tile>
    ),
  },
  {
    name: "TV",
    icon: (
      <Tile bg="bg-linear-to-b from-[#24302d] to-[#101414]">
        <FaApple x={7} y={20} width={28} height={28} color="#fff" />
        <text x="47" y="46" textAnchor="middle" fontSize="32" fontFamily="Inter, sans-serif" fill="#fff">
          tv
        </text>
      </Tile>
    ),
  },
  {
    name: "News",
    icon: (
      <Tile bg="bg-white">
        <path d="M14 14h12l29 41H42zM36 14h19v27zM14 30l19 25H14z" fill="#ea4858" />
      </Tile>
    ),
  },
  {
    name: "Numbers",
    icon: (
      <Free>
        <path d="M1 44h74v30H1z" fill="#f7f7f7" />
        <rect x="11" y="38" width="13" height="29" rx="1" fill="#dd4747" />
        <rect x="26" y="24" width="13" height="43" rx="1" fill="#ee9433" />
        <rect x="41" y="3" width="13" height="64" rx="1" fill="#53bf45" />
        <rect x="56" y="16" width="13" height="51" rx="1" fill="#3d82ee" />
        <path d="M11 38h13v4H11zM26 24h13v5H26zM41 3h13v4H41zM56 16h13v4H56z" fill="#fff" opacity="0.4" />
        <path d="M5 48v3M5 53v3M5 58v3M5 64v3" stroke="#444" strokeWidth="2" />
      </Free>
    ),
  },
  {
    name: "Keynote",
    icon: (
      <Free>
        <path d="M9 1h58l6 30H3z" fill="#3b92ec" />
        <path d="M3 29h70v4H3z" fill="#1f5fa8" />
        <path d="M17 5h41l3 21H15z" fill="#fff" />
        <circle cx="30" cy="17" r="7" fill="#e8c33a" />
        <path d="M30 17v-7a7 7 0 0 1 7 7z" fill="#e55bbd" />
        <path d="M30 17h7a7 7 0 0 1-7 7z" fill="#ea5037" />
        <path d="M30 17v-7a7 7 0 0 0-7 7z" fill="#38a1ea" />
        <path d="M42 12h14M42 16h14M42 20h14" stroke="#a9b4bd" />
        <path d="M38 33v34" stroke="#aeb6be" strokeWidth="6" />
        <ellipse cx="38" cy="70" rx="17" ry="6" fill="#aebfce" />
        <ellipse cx="38" cy="68" rx="13" ry="4" fill="#dce6ee" />
      </Free>
    ),
  },
  {
    name: "WeChat",
    running: true,
    icon: (
      <Tile bg="bg-linear-to-b from-[#4edd6b] to-[#46c65e]">
        <ellipse cx="27" cy="29" rx="19" ry="16" fill="#fff" />
        <path d="M17 40l-3 8 9-4z" fill="#fff" />
        <ellipse cx="44" cy="42" rx="17" ry="14" fill="#fff" stroke="#49d065" strokeWidth="2" />
        <path d="M50 52l6 4-2-7z" fill="#fff" />
        <circle cx="21" cy="24" r="2.500" fill="#49d065" />
        <circle cx="33" cy="24" r="2.500" fill="#49d065" />
        <circle cx="39" cy="38" r="2" fill="#49d065" />
        <circle cx="50" cy="38" r="2" fill="#49d065" />
      </Tile>
    ),
  },
  {
    name: "Pages",
    icon: (
      <Free>
        <path d="M3 8L60 0l12 68-58 10z" fill="#fbfbfb" />
        <path d="M3 8L60 0l2 12-57 9z" fill="#ee9127" />
        <text x="8" y="17" fontSize="9" fontFamily="Inter, sans-serif" fill="#fff" transform="rotate(-8 8 17)">
          PAGES
        </text>
        <path d="M11 25l27-4 3 19-28 4z" fill="#3272c8" />
        <path d="M20 27q6 6 13-2-1 12-7 15-6-6-6-13z" fill="#ef8a26" />
        <path d="M42 22l10-1M43 27l10-1M44 32l8-1M14 49l42-7M15 53l40-7M16 57l22-3M17 65l34-6M18 69l30-5" stroke="#8f8f8f" strokeWidth="1.500" strokeDasharray="3 1" />
        <path d="M66 0l7 2-15 55-7-2z" fill="#f0a12f" />
        <path d="M51 53l7 2-8 13-8 9z" fill="#4a4a4c" />
      </Free>
    ),
  },
  {
    name: "App Store",
    icon: (
      <Tile bg="bg-linear-to-b from-[#3ba6f0] to-[#2149d8]">
        <path d="M39 16L19 54M31 16l22 39M14 43h42" stroke="#f2f7ff" strokeWidth="6" strokeLinecap="round" />
      </Tile>
    ),
  },
  {
    name: "System Preferences",
    icon: (
      <Tile bg="bg-linear-to-b from-[#d0dde6] to-[#8c8983]">
        <circle cx="35" cy="35" r="30" fill="#3d4145" />
        <circle cx="35" cy="35" r="26" fill="none" stroke="#a9abad" strokeWidth="4" strokeDasharray="1.500 1.500" />
        <circle cx="35" cy="35" r="22" fill="none" stroke="#9fa1a3" strokeWidth="3" />
        <circle cx="35" cy="35" r="12" fill="#303234" stroke="#9fa1a3" strokeWidth="3" />
        <path d="M35 35h24M35 35L23 15M35 35L23 56" stroke="#b4b6b8" strokeWidth="3" />
      </Tile>
    ),
  },
  {
    name: "Terminal",
    icon: (
      <Tile bg="bg-[#b9c3c9]">
        <rect x="2" y="2" width="66" height="66" rx="14" fill="#050505" />
        <rect x="7" y="7" width="56" height="55" rx="9" fill="#232323" />
        <path d="M13 13l7 5-7 5" fill="none" stroke="#fff" strokeWidth="2.500" />
        <path d="M23 26h11" stroke="#fff" strokeWidth="2.500" />
      </Tile>
    ),
  },
  {
    name: "Sublime Text",
    icon: (
      <Tile bg="bg-[#474747]">
        <path d="M54 11v14L33 33l21 8v6L16 60V47l20-8-20-8v-7z" fill="#f09628" />
        <path d="M36 39l18 8-4 1-20-7z" fill="#c9741a" />
      </Tile>
    ),
  },
];

const dockRecent: typeof dockApps = [
  {
    name: "Video Player",
    running: true,
    icon: (
      <Tile bg="bg-linear-to-b from-[#3b3b3d] to-[#1e1e20]">
        <path d="M27 18q1-3 4 0l28 15q3 2 0 5L31 52q-4 3-4-1z" fill="#2f9cf2" />
        <path d="M20 27v16M12 30v10" stroke="#6624d8" strokeWidth="4" strokeLinecap="round" />
      </Tile>
    ),
  },
  {
    name: "Media Player",
    icon: (
      <svg viewBox="0 0 82 82" className="size-[82px] drop-shadow-md" aria-hidden="true">
        <circle cx="41" cy="41" r="40" fill="#f5f5f5" />
        <circle cx="41" cy="41" r="27.500" fill="#fff" stroke="#f07627" strokeWidth="8" />
        <path d="M34 30l18 11-18 11z" fill="#f07627" />
      </svg>
    ),
  },
  {
    name: "Zoom",
    running: true,
    icon: (
      <Free>
        <rect width="76" height="76" y="1" rx="19" fill="#4370f4" />
        <rect x="14" y="26" width="35" height="26" rx="6" fill="#fff" />
        <path d="M51 34l11-8v26l-11-8z" fill="#fff" />
      </Free>
    ),
  },
];

const dockFiles: typeof dockApps = [
  {
    name: "Document",
    icon: (
      <Free className="h-[82px] w-[76px]">
        <path d="M14 0h33l14 0v78H12V4z" fill="#fafafa" />
        <path d="M44 0h17v28H44z" fill="#e6e6e6" stroke="#c6c6c6" />
        <path
          d="M16 10h26M16 14h24M16 18h26M16 22h22M16 26h26M16 32h42M16 36h40M16 40h42M16 44h36M16 48h42M16 52h42M16 56h30M16 60h42"
          stroke="#8f8f8f"
          strokeWidth="1.500"
          strokeDasharray="5 1"
        />
        <text x="37" y="74" textAnchor="middle" fontSize="11" fontFamily="Inter, sans-serif" fill="#444">
          PDF
        </text>
      </Free>
    ),
  },
  {
    name: "Trash",
    icon: (
      <Free className="h-[82px] w-[76px]">
        <path d="M8 12l10-10 10 6 4-7 10 8 8-8 6 10 10 4-4 6H12z" fill="#c9cacb" />
        <path d="M18 10l8 3-5 4zM40 8l7 6-9 2z" fill="#3c3c40" />
        <path d="M28 9l6 5-8 2z" fill="#3fa3e6" />
        <path d="M48 10l6 4-6 2z" fill="#d8582f" />
        <path d="M8 12q30 10 60 0l-8 60q-22 9-44 0z" fill="#d9d9dc" opacity="0.95" />
        <path d="M8 12q30 10 60 0" fill="none" stroke="#fafafa" strokeWidth="2" />
        <path d="M26 30l10 30M48 26l-6 34M20 50l12 14" stroke="#c4c4c8" strokeWidth="3" />
      </Free>
    ),
  },
];

const DockItem = ({ app, className }: { app: (typeof dockApps)[number]; className: string }) => (
  <button aria-label={app.name} className={`relative flex h-full items-center justify-center pb-[8px] ${className}`}>
    {app.icon}
    {app.running && <span className="absolute bottom-[3px] left-1/2 -ml-[3px] size-[7px] rounded-full bg-[#57575c]" />}
  </button>
);

const Desktop = () => (
  <div className="relative h-[123px] overflow-hidden">
    <div className="absolute inset-0 flex" aria-hidden="true">
      <div className="w-[312px] bg-linear-to-b from-[#7d7ba6] to-[#b5b6f2]" />
      <div className="w-[183px] border-r-2 border-[#787878] bg-[#9b9b9b]" />
      <div className="flex-1 bg-[#919191]" />
      <div className="w-[631px] border-l-2 border-[#787878] bg-linear-to-b from-[#8c8c8c] to-[#f6f6f6]" />
    </div>
    <div className="relative mx-[73px] mt-[11px] flex h-[112px] items-center rounded-[32px] border-t-2 border-white/40 bg-[linear-gradient(to_right,#cdcbf4_0,#cfcdf5_220px,#e0e0e4_340px,#dfdfe1_85%,#ececef)] pr-[2px] pl-[4px] shadow-[0_0_4px_rgba(0,0,0,0.3)]">
      {dockApps.map((a) => (
        <DockItem key={a.name} app={a} className="min-w-0 flex-1" />
      ))}
      <span className="mx-[20px] mb-[4px] h-[84px] w-[2px] bg-[#a9a9ad]" />
      {dockRecent.map((a) => (
        <DockItem key={a.name} app={a} className="w-[94px] shrink-0" />
      ))}
      <span className="mx-[20px] mb-[4px] h-[84px] w-[2px] bg-[#a9a9ad]" />
      {dockFiles.map((a) => (
        <DockItem key={a.name} app={a} className="w-[94px] shrink-0" />
      ))}
    </div>
  </div>
);

export default function App() {
  return (
    <div className="flex h-screen flex-col overflow-hidden border-8 border-[#8ab735] bg-[#a0a0a0] font-[Inter,'Noto_Sans_CJK_SC',sans-serif]">
      <MenuBar />
      <TabStrip />
      <Toolbar />
      <BookmarksBar />
      <main className="min-h-0 flex-1 overflow-hidden bg-[#a0a0a0] pt-[4px]">
        <EinPage />
      </main>
      <Downloads />
      <Desktop />
    </div>
  );
}
